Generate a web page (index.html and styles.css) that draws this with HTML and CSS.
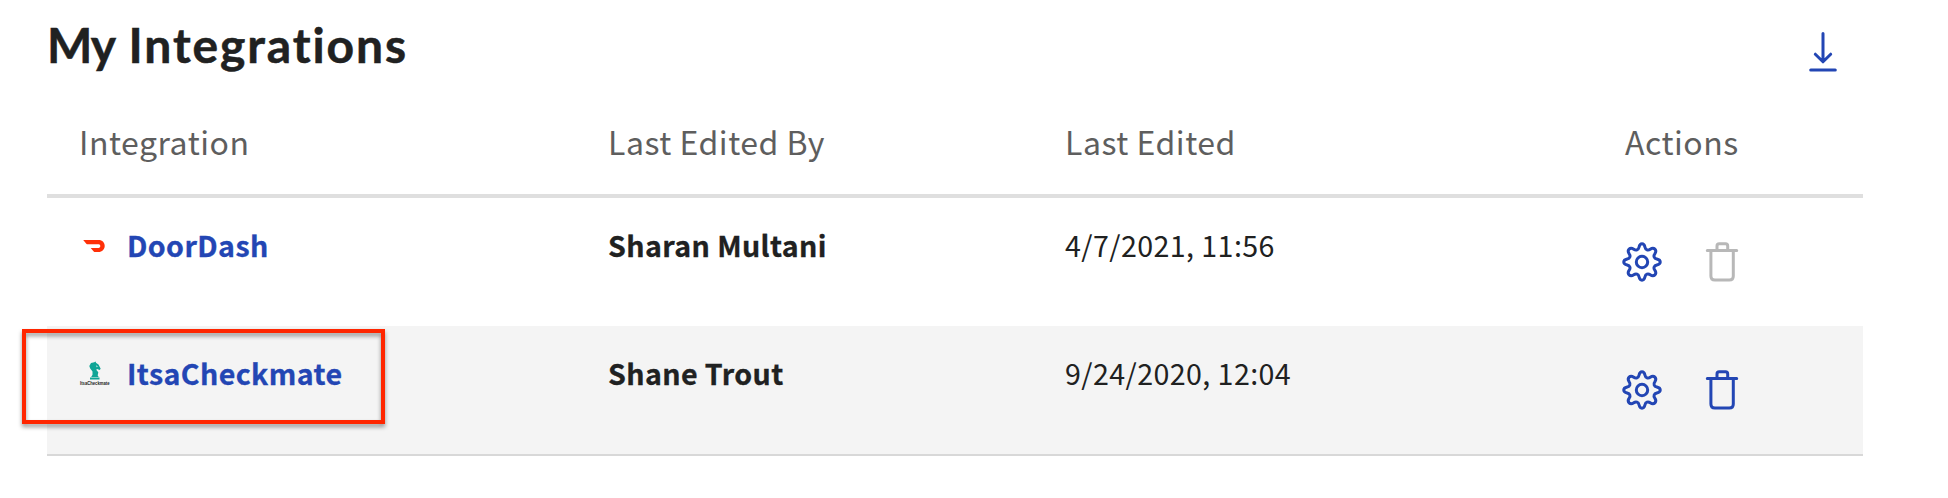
FILE: index.html
```html
<!DOCTYPE html>
<html lang="en">
<head>
<meta charset="utf-8">
<title>My Integrations</title>
<link rel="stylesheet" href="styles.css">
</head>
<body>
<svg class="sprite" aria-hidden="true">
  <symbol id="gear" viewBox="0 0 40 40">
    <path d="M17 5.2C18 .6 22 .6 23 5.2C23.6 8 26 8.8 28.2 7.2C32 4.600 35.400 8 32.800 11.800C31.200 14 32 16.400 34.800 17C39.400 18 39.400 22 34.800 23C32 23.600 31.200 26 32.800 28.200C35.400 32 32 35.400 28.200 32.800C26 31.200 23.600 32 23 34.800C22 39.400 18 39.400 17 34.800C16.400 32 14 31.200 11.800 32.800C8 35.400 4.600 32 7.200 28.200C8.800 26 8 23.600 5.200 23C.6 22 .6 18 5.200 17C8 16.400 8.800 14 7.200 11.800C4.600 8 8 4.600 11.800 7.200C14 8.800 16.400 8 17 5.200Z"/>
    <circle cx="20" cy="20" r="5.7"/>
  </symbol>
  <symbol id="trash" viewBox="0 0 40 40">
    <path d="M5.300 8.500H34.700M8.900 9V34Q8.900 38 12.900 38H27.300Q31.300 38 31.300 34V9M15 8V4Q15 1.800 17.200 1.800H23.500Q25.700 1.800 25.700 4V8"/>
  </symbol>
</svg>
<main class="page">
  <header class="top">
    <h1 class="title"><span class="tight">My</span> Integrations</h1>
    <button class="download" aria-label="Download">
      <svg class="icon" width="30" height="42" viewBox="0 0 30 42"><path d="M15 2.500V30M7.300 23.200L15 30.800L22.700 23.200M2.700 39H27.300"/></svg>
    </button>
  </header>
  <section class="table">
    <div class="row head">
      <span>Integration</span><span>Last Edited By</span><span>Last Edited</span><span class="h-act">Actions</span>
    </div>
    <div class="row">
      <div class="name">
        <svg class="logo" width="32" height="32" viewBox="0 0 32 32"><path fill="#ff3008" d="M4.200 10H19.500C23.500 10 25.700 12.700 25.700 16C25.700 19.300 23 22 19.500 22H16.200Q15.300 22 14.700 21.400L11.700 18H19.600C21.900 18 21.900 14.300 19.600 14.300H8.800Q7.900 14.300 7.300 13.700Z"/></svg>
        <a class="link">DoorDash</a>
      </div>
      <span class="by">Sharan Multani</span>
      <span class="date">4/7/2021, 11:56</span>
      <div class="actions">
        <svg class="icon" width="40" height="40"><use href="#gear"/></svg>
        <svg class="icon off" width="40" height="40"><use href="#trash"/></svg>
      </div>
    </div>
    <div class="row shaded">
      <div class="name">
        <svg class="logo" width="32" height="32" viewBox="0 0 32 32"><path fill="#0fa596" d="M10.300 8L12 5L15.300 4.300L16.500 3.600L17.200 5L19.500 6.500L21.700 10.800L20.600 12L18.200 11L17.200 11.800L19.300 14.300L18.700 17.400L19.700 19H12.200L13.500 16.800V13.500L11.200 10.500ZM11 19.600H20.500V21.500H11Z"/><path d="M17 7.300L19 8.500L17.500 9.200" fill="#b7e3dd"/><text class="mark" x="1" y="27.300" textLength="29.500" lengthAdjust="spacingAndGlyphs">ItsaCheckmate</text></svg>
        <a class="link">ItsaCheckmate</a>
      </div>
      <span class="by">Shane Trout</span>
      <span class="date">9/24/2020, 12:04</span>
      <div class="actions">
        <svg class="icon" width="40" height="40"><use href="#gear"/></svg>
        <svg class="icon" width="40" height="40"><use href="#trash"/></svg>
      </div>
      <div class="highlight"></div>
    </div>
  </section>
</main>
</body>
</html>
```
FILE: styles.css
```css
* { box-sizing: border-box; }
body { margin: 0; background: #fff; color: #202121; font-family: "Noto Sans CJK SC", sans-serif; }
.sprite { display: none; }
.page { height: 498px; padding: 0 85px 0 47px; }
.top { height: 100px; display: flex; justify-content: space-between; align-items: flex-start; }
.title { margin: 15px 0 0; font: 700 48px/60px Lato, sans-serif; letter-spacing: 1.9px; white-space: nowrap; -webkit-text-stroke: .5px; }
.tight { letter-spacing: -1.1px; }
.download { margin: 31px 25px 0 0; padding: 0; border: 0; background: none; line-height: 0; }
.icon { fill: none; stroke: #2346b4; stroke-width: 3; stroke-linecap: round; stroke-linejoin: round; }
.off { stroke: #b8b8b8; }
.row { position: relative; height: 128px; padding: 0 0 0 32px; display: grid; grid-template-columns: 529px 457px 557px 1fr; align-items: start; white-space: nowrap; font-size: 28.600px; line-height: 40px; }
.row > span, .link { padding-top: 27px; }
.head { height: 98px; border-bottom: 4px solid #dfdfdf; color: #5e5e5e; font-size: 32px; }
.head > span { padding-top: 21px; letter-spacing: .52px; }
.table .h-act { padding-left: 3px; }
.name { display: flex; align-items: flex-start; gap: 16px; }
.logo { margin-top: 32px; overflow: visible; }
.link { font-weight: 700; color: #2346b4; letter-spacing: .4px; -webkit-text-stroke: .3px; }
.by { font-weight: 700; letter-spacing: .4px; -webkit-text-stroke: .3px; }
.date { letter-spacing: .43px; }
.shaded { background: #f4f4f4; height: 130px; border-bottom: 2px solid #d8d8d8; }
.actions { display: flex; gap: 40px; padding-top: 44px; }
.mark { font: 700 5px "Liberation Sans", sans-serif; fill: #222; }
.highlight { position: absolute; left: -25px; top: 3px; width: 363px; height: 95px; border: 4px solid #ff2600; filter: drop-shadow(0 3px 2px rgba(0,0,0,.4)); }
```
